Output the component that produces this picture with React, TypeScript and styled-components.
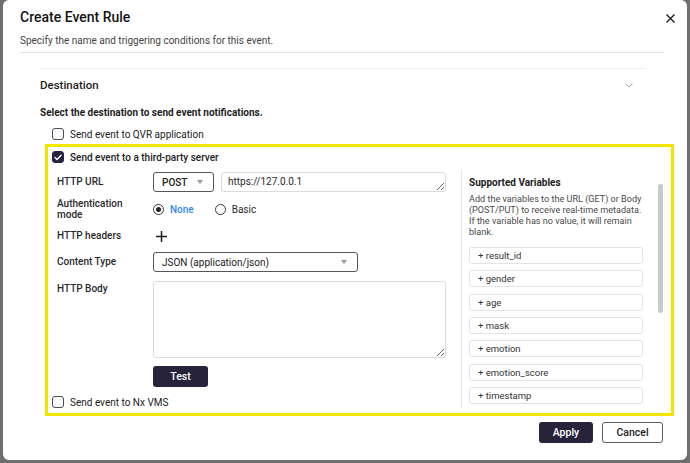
import React from "react";
import styled, { createGlobalStyle } from "styled-components";

const GlobalStyle = createGlobalStyle`
  html, body {
    margin: 0;
    padding: 0;
    background: #6f6f6f;
    font-family: Roboto, "Liberation Sans", Arial, sans-serif;
  }
  * { box-sizing: border-box; }
`;

const Page = styled.div`
  height: 463px;
  padding: 0 3px 3px 3px;
  display: flex;
`;

const Modal = styled.div`
  flex: 1;
  background: #fff;
  border-radius: 6px;
  display: flex;
  flex-direction: column;
  overflow: hidden;
`;

const HeaderBar = styled.div`
  display: flex;
  justify-content: space-between;
  align-items: flex-start;
  padding: 8px 12px 0 17px;
`;

const Title = styled.h1`
  margin: 0;
  font-size: 14px;
  line-height: 18px;
  font-weight: 500;
  color: #141414;
`;

const CloseButton = styled.button`
  border: none;
  background: none;
  padding: 0;
  margin-top: 6px;
  width: 9px;
  height: 9px;
  display: flex;
  cursor: pointer;
`;

const Subtitle = styled.p`
  margin: 8px 23px 0 17px;
  padding-bottom: 4px;
  border-bottom: 1px solid #e4e4e4;
  font-size: 10px;
  line-height: 14px;
  color: #444;
`;

const Body = styled.div`
  flex: 1;
  padding: 15px 13px 0 37px;
  display: flex;
  flex-direction: column;
`;

const SectionHeader = styled.div`
  margin-right: 30px;
  height: 33px;
  border-top: 1px solid #eeeeee;
  display: flex;
  align-items: center;
  justify-content: space-between;
  padding-right: 11px;
`;

const SectionTitle = styled.h2`
  margin: 0;
  font-size: 11.5px;
  font-weight: 500;
  color: #1d1d1d;
`;

const Prompt = styled.div`
  margin-top: 5px;
  font-size: 10px;
  line-height: 14px;
  font-weight: 700;
  color: #1d1d1d;
`;

const OptionRow = styled.label<{ $mt?: number; $indent?: number }>`
  display: flex;
  align-items: center;
  gap: 6px;
  height: 12px;
  margin-top: ${(p) => p.$mt ?? 0}px;
  padding-left: ${(p) => p.$indent ?? 0}px;
  font-size: 10px;
  color: #222;
`;

const OptionText = styled.span<{ $bold?: boolean }>`
  font-weight: ${(p) => (p.$bold ? 500 : 400)};
`;

const Box = styled.span<{ $checked?: boolean }>`
  width: 12px;
  height: 12px;
  border-radius: 3px;
  border: 1.3px solid ${(p) => (p.$checked ? "#27233a" : "#4a4a55")};
  background: ${(p) => (p.$checked ? "#27233a" : "#fff")};
  display: flex;
  align-items: center;
  justify-content: center;
  flex-shrink: 0;
`;

const Highlight = styled.div`
  margin: 4px 0 0 5px;
  border: 3px solid #f2e600;
  display: flex;
`;

const LeftCol = styled.div`
  flex: 1;
  padding: 4px 0 5px 4px;
  display: flex;
  flex-direction: column;
`;

const Form = styled.div`
  margin: 9px 0 0 5px;
  display: flex;
  flex-direction: column;
`;

const FormRow = styled.div<{ $mt?: number; $h: number; $top?: boolean }>`
  display: flex;
  align-items: ${(p) => (p.$top ? "flex-start" : "center")};
  height: ${(p) => p.$h}px;
  margin-top: ${(p) => p.$mt ?? 0}px;
`;

const Label = styled.div<{ $pt?: number }>`
  width: 96px;
  flex-shrink: 0;
  padding-top: ${(p) => p.$pt ?? 0}px;
  padding-right: 12px;
  font-size: 10px;
  line-height: 10.5px;
  font-weight: 500;
  color: #2a2a2a;
`;

const Select = styled.div<{ $w: number }>`
  width: ${(p) => p.$w}px;
  height: 20px;
  border: 1px solid #55555c;
  border-radius: 3px;
  display: flex;
  align-items: center;
  justify-content: space-between;
  padding: 0 10px 0 8px;
  font-size: 10px;
  color: #222;
  &::after {
    content: "";
    border-left: 3.5px solid transparent;
    border-right: 3.5px solid transparent;
    border-top: 4px solid #9a9a9a;
  }
`;

const SelectText = styled.span<{ $bold?: boolean }>`
  font-weight: ${(p) => (p.$bold ? 500 : 400)};
`;

const TextArea = styled.textarea<{ $w: number; $h: number }>`
  width: ${(p) => p.$w}px;
  height: ${(p) => p.$h}px;
  border: 1px solid #dcdcdc;
  border-radius: 3px;
  padding: 3px 6px;
  font-family: Roboto, "Liberation Sans", Arial, sans-serif;
  font-size: 10px;
  line-height: 12px;
  color: #2a2a2a;
  resize: both;
  outline: none;
  overflow: hidden;
`;

const Gap = styled.div<{ $w: number }>`
  width: ${(p) => p.$w}px;
  flex-shrink: 0;
`;

const RadioGroup = styled.div`
  display: flex;
  align-items: center;
  gap: 21px;
`;

const RadioOption = styled.label<{ $active?: boolean }>`
  display: flex;
  align-items: center;
  gap: 6px;
  font-size: 10px;
  font-weight: ${(p) => (p.$active ? 500 : 400)};
  color: ${(p) => (p.$active ? "#2f8bf1" : "#2a2a2a")};
`;

const RadioCircle = styled.span<{ $on?: boolean }>`
  width: 11px;
  height: 11px;
  border-radius: 50%;
  border: 1px solid #3a3a40;
  display: flex;
  align-items: center;
  justify-content: center;
  &::after {
    content: "";
    width: 5px;
    height: 5px;
    border-radius: 50%;
    background: ${(p) => (p.$on ? "#26232f" : "transparent")};
  }
`;

const IconButton = styled.button`
  border: none;
  background: none;
  padding: 0;
  margin-left: 3px;
  display: flex;
`;

const DarkButton = styled.button<{ $w: number }>`
  width: ${(p) => p.$w}px;
  height: 21px;
  border: none;
  border-radius: 3px;
  background: #27233a;
  color: #fff;
  font-family: Roboto, "Liberation Sans", Arial, sans-serif;
  font-size: 10.5px;
  font-weight: 500;
`;

const OutlineButton = styled.button<{ $w: number }>`
  width: ${(p) => p.$w}px;
  height: 21px;
  border: 1px solid #5a5a60;
  border-radius: 3px;
  background: #fff;
  color: #222;
  font-family: Roboto, "Liberation Sans", Arial, sans-serif;
  font-size: 10.5px;
  font-weight: 500;
`;

const VarPanel = styled.div`
  width: 210px;
  height: 237px;
  margin-top: 23px;
  border-left: 1px solid #e4e4e4;
  padding-left: 7px;
  display: flex;
`;

const VarContent = styled.div`
  width: 174px;
  overflow: hidden;
  padding-top: 6px;
`;

const VarTitle = styled.div`
  font-size: 10px;
  line-height: 13px;
  font-weight: 700;
  color: #1d1d1d;
`;

const VarDesc = styled.p`
  margin: 5px 0 0;
  font-size: 9.1px;
  line-height: 11px;
  color: #4a4a4a;
`;

const VarList = styled.div`
  margin-top: 9px;
  display: flex;
  flex-direction: column;
  gap: 6.33px;
`;

const VarItem = styled.div`
  height: 17px;
  flex-shrink: 0;
  border: 1px solid #e3e3e3;
  border-radius: 3px;
  padding-left: 8px;
  display: flex;
  align-items: center;
  font-size: 9.5px;
  color: #333;
`;

const ScrollTrack = styled.div`
  margin-left: 15px;
  width: 5px;
  padding-top: 14px;
`;

const ScrollThumb = styled.div`
  height: 129px;
  border-radius: 3px;
  background: #c9c9c9;
`;

const Footer = styled.div`
  display: flex;
  justify-content: flex-end;
  gap: 9px;
  padding: 6px 24px 17px 0;
`;

const CheckIcon = () => (
  <svg width="8" height="7" viewBox="0 0 8 7">
    <path d="M1 3.6 L3 5.6 L7 1.2" fill="none" stroke="#fff" strokeWidth="1.4" strokeLinecap="round" strokeLinejoin="round" />
  </svg>
);

const variables = ["result_id", "gender", "age", "mask", "emotion", "emotion_score", "timestamp"];

export default function App() {
  return (
    <>
      <GlobalStyle />
      <Page>
        <Modal>
          <HeaderBar>
            <Title>Create Event Rule</Title>
            <CloseButton aria-label="Close">
              <svg width="9" height="9" viewBox="0 0 9 9">
                <path d="M0.5 0.5 L8.5 8.5 M8.5 0.5 L0.5 8.5" stroke="#1f1f1f" strokeWidth="1.4" />
              </svg>
            </CloseButton>
          </HeaderBar>
          <Subtitle>Specify the name and triggering conditions for this event.</Subtitle>
          <Body>
            <SectionHeader>
              <SectionTitle>Destination</SectionTitle>
              <svg width="8" height="5" viewBox="0 0 8 5">
                <path d="M0.5 0.5 L4 4 L7.5 0.5" fill="none" stroke="#9a9a9a" strokeWidth="0.9" />
              </svg>
            </SectionHeader>
            <Prompt>Select the destination to send event notifications.</Prompt>
            <OptionRow $mt={8} $indent={12}>
              <Box />
              <OptionText>Send event to QVR application</OptionText>
            </OptionRow>
            <Highlight>
              <LeftCol>
                <OptionRow>
                  <Box $checked>
                    <CheckIcon />
                  </Box>
                  <OptionText $bold>Send event to a third-party server</OptionText>
                </OptionRow>
                <Form>
                  <FormRow $h={20}>
                    <Label>HTTP URL</Label>
                    <Select $w={61}>
                      <SelectText $bold>POST</SelectText>
                    </Select>
                    <Gap $w={7} />
                    <TextArea $w={225} $h={20} readOnly value="https://127.0.0.1" />
                  </FormRow>
                  <FormRow $h={21} $mt={7}>
                    <Label>Authentication mode</Label>
                    <RadioGroup>
                      <RadioOption $active>
                        <RadioCircle $on />
                        None
                      </RadioOption>
                      <RadioOption>
                        <RadioCircle />
                        Basic
                      </RadioOption>
                    </RadioGroup>
                  </FormRow>
                  <FormRow $h={18} $mt={7}>
                    <Label>HTTP headers</Label>
                    <IconButton aria-label="Add header">
                      <svg width="11" height="11" viewBox="0 0 11 11">
                        <path d="M5.5 0 V11 M0 5.5 H11" stroke="#1f1f1f" strokeWidth="1.5" />
                      </svg>
                    </IconButton>
                  </FormRow>
                  <FormRow $h={20} $mt={7}>
                    <Label>Content Type</Label>
                    <Select $w={205}>
                      <SelectText>JSON (application/json)</SelectText>
                    </Select>
                  </FormRow>
                  <FormRow $h={77} $mt={9} $top>
                    <Label $pt={3}>HTTP Body</Label>
                    <TextArea $w={293} $h={77} readOnly value="" />
                  </FormRow>
                  <FormRow $h={21} $mt={8}>
                    <Label />
                    <DarkButton $w={55}>Test</DarkButton>
                  </FormRow>
                </Form>
                <OptionRow $mt={9}>
                  <Box />
                  <OptionText>Send event to Nx VMS</OptionText>
                </OptionRow>
              </LeftCol>
              <VarPanel>
                <VarContent>
                  <VarTitle>Supported Variables</VarTitle>
                  <VarDesc>
                    Add the variables to the URL (GET) or Body (POST/PUT) to receive real-time metadata. If the
                    variable has no value, it will remain blank.
                  </VarDesc>
                  <VarList>
                    {variables.map((v) => (
                      <VarItem key={v}>+ {v}</VarItem>
                    ))}
                  </VarList>
                </VarContent>
                <ScrollTrack>
                  <ScrollThumb />
                </ScrollTrack>
              </VarPanel>
            </Highlight>
          </Body>
          <Footer>
            <DarkButton $w={54}>Apply</DarkButton>
            <OutlineButton $w={61}>Cancel</OutlineButton>
          </Footer>
        </Modal>
      </Page>
    </>
  );
}
